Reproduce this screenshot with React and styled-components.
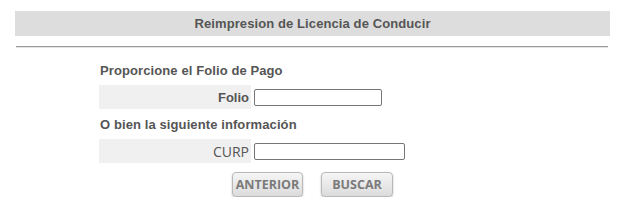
import React from "react";
import styled, { createGlobalStyle } from "styled-components";

const GlobalStyle = createGlobalStyle`
  body {
    margin: 0;
    padding: 0;
    background: #fff;
    font-family: "Liberation Sans", Arial, sans-serif;
  }
`;

const Page = styled.div`
  width: 595px;
  margin-left: 15px;
  padding-top: 11px;
`;

const Banner = styled.div`
  height: 25px;
  background-color: #dddddd;
  color: #555555;
  font-size: 13px;
  font-weight: bold;
  letter-spacing: 0.1px;
  display: flex;
  align-items: center;
  justify-content: center;
`;

const Rule = styled.hr`
  margin: 10px 2px 0 1px;
  border: 0;
  border-top: 1px solid #9a9a9a;
  border-bottom: 1px solid #e4e4e4;
  height: 0;
`;

const Form = styled.div`
  width: 427px;
  margin: 11px auto 0;
  display: grid;
  grid-template-columns: 152px 1fr;
  grid-template-rows: 22px 24px 22px 24px;
  column-gap: 3px;
  row-gap: 4px;
`;

const Caption = styled.div`
  grid-column: 1 / 3;
  display: flex;
  align-items: center;
  padding-left: 1px;
  color: #555555;
  font-size: 13px;
  font-weight: bold;
  letter-spacing: 0.1px;
`;

const Label = styled.div`
  background-color: #f0f0f0;
  color: #555555;
  display: flex;
  align-items: center;
  justify-content: flex-end;
  padding-right: 2px;
  font-family: ${(p) => (p.$open ? '"Open Sans", sans-serif' : '"Liberation Sans", Arial, sans-serif')};
  font-size: ${(p) => (p.$open ? "14px" : "13px")};
  font-weight: ${(p) => (p.$open ? "normal" : "bold")};
`;

const Cell = styled.div`
  display: flex;
  align-items: center;
`;

const Field = styled.input`
  box-sizing: border-box;
  width: ${(p) => p.$w}px;
  height: 17px;
  border: 1px solid #767676;
  border-radius: 2px;
  padding: 1px 2px;
  font-size: 13px;
  background: #fff;
  outline: none;
`;

const Buttons = styled.div`
  display: flex;
  justify-content: center;
  gap: 18px;
  margin-top: 9px;
`;

const Button = styled.button`
  height: 25px;
  width: ${(p) => p.$w}px;
  padding: 0;
  border: 1px solid #b9b9b9;
  border-radius: 4px;
  background: linear-gradient(#f5f5f5, #dcdcdc);
  box-shadow: 0 1px 2px rgba(0, 0, 0, 0.25);
  color: #7a7a7a;
  font-family: "Open Sans", sans-serif;
  font-weight: bold;
  font-size: 12.5px;
  cursor: pointer;
`;

export default function App() {
  return (
    <Page>
      <GlobalStyle />
      <Banner>Reimpresion de Licencia de Conducir</Banner>
      <Rule />
      <Form>
        <Caption>Proporcione el Folio de Pago</Caption>
        <Label>Folio</Label>
        <Cell>
          <Field $w={128} />
        </Cell>
        <Caption>O bien la siguiente información</Caption>
        <Label $open>CURP</Label>
        <Cell>
          <Field $w={151} />
        </Cell>
      </Form>
      <Buttons>
        <Button $w={71}>ANTERIOR</Button>
        <Button $w={72}>BUSCAR</Button>
      </Buttons>
    </Page>
  );
}
